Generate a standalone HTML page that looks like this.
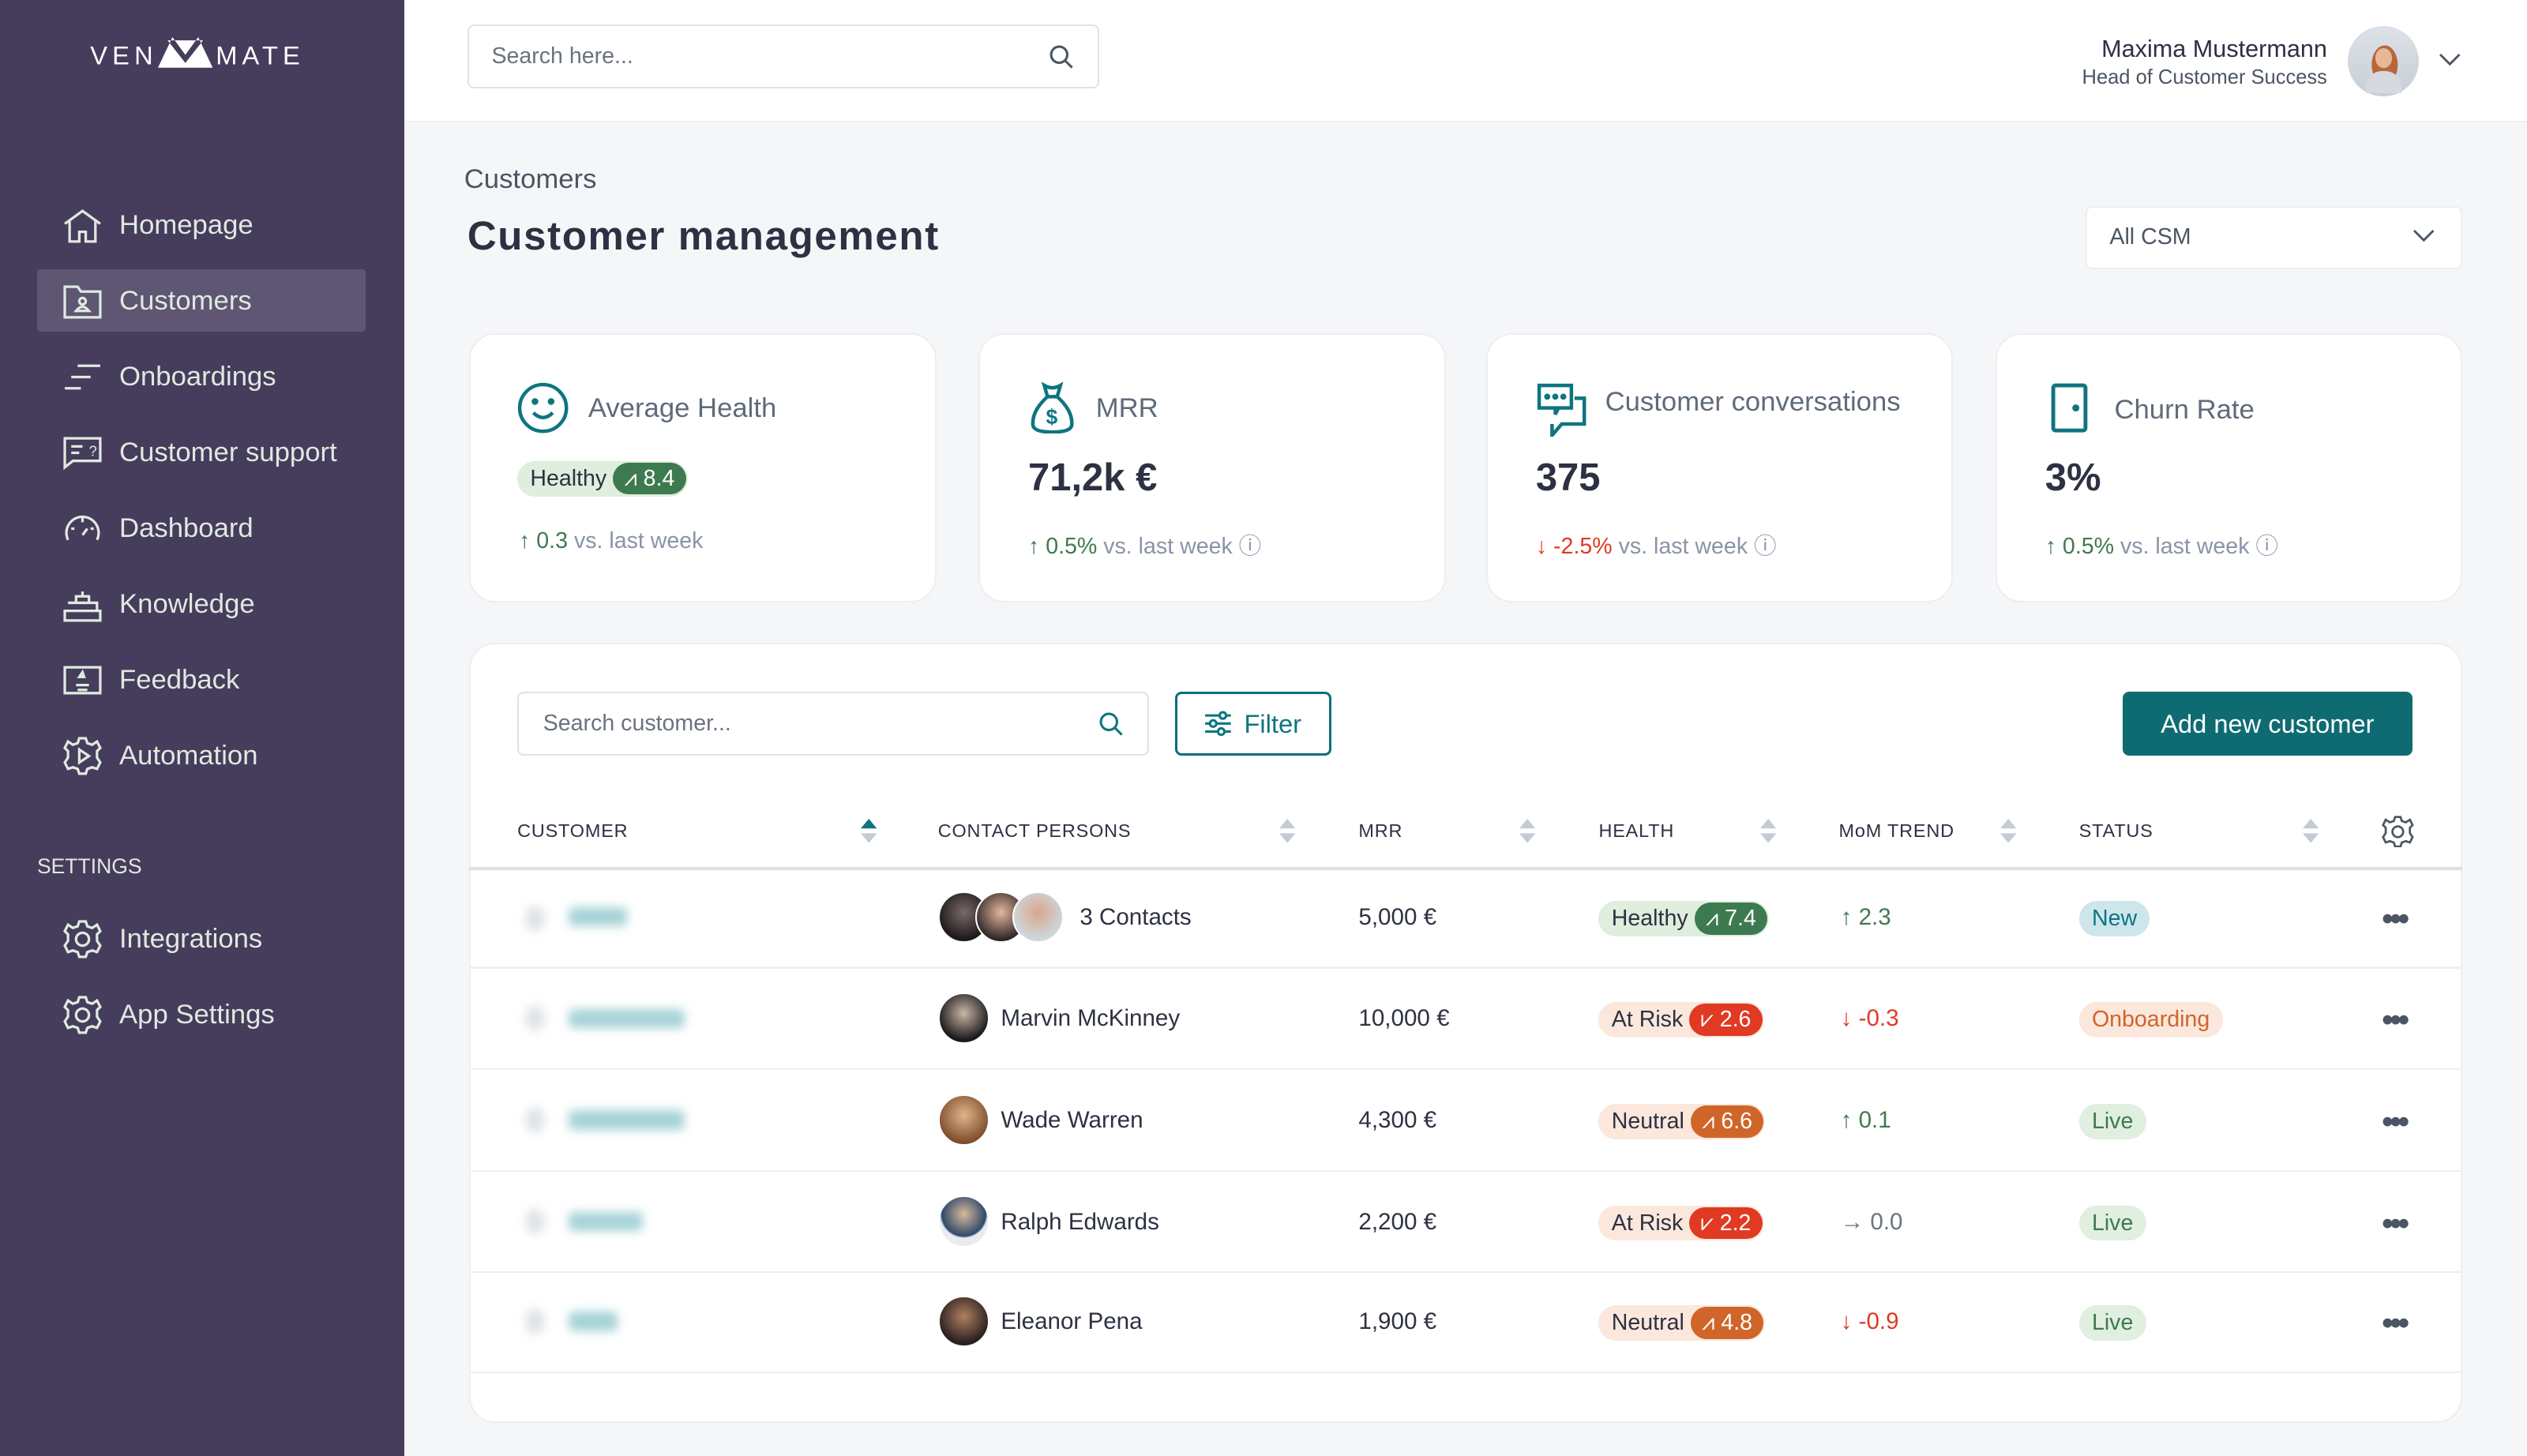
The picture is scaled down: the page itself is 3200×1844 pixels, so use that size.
<!DOCTYPE html>
<html><head><meta charset="utf-8">
<style>
*{box-sizing:border-box;margin:0;padding:0}
html,body{width:3200px;height:1844px;overflow:hidden;background:#f5f6f8}
#w{zoom:2.0408;width:1568px;height:904px;position:relative;font-family:"Liberation Sans",sans-serif;color:#2d3142;background:#f5f6f8}
.a{position:absolute}
.side{left:0;top:0;width:251px;height:904px;background:#463c5c}
.nav{position:absolute;left:74px;font-size:17px;color:#dfe9e0;line-height:20px}
.ni{position:absolute;left:39px;width:24px;height:24px}
.top{left:251px;top:0;width:1317px;height:76px;background:#fff;border-bottom:1px solid #eceef2}
.box{position:absolute;background:#fff;border:1px solid #dfe2e6;border-radius:4px}
.card{position:absolute;top:207px;width:290px;height:167px;background:#fff;border:1px solid #eceef2;border-radius:16px}
.ct{position:absolute;font-size:17px;color:#5f6b7a}
.cv{position:absolute;left:30px;top:76px;font-size:24px;font-weight:bold;color:#2d3142}
.tr{position:absolute;left:30px;top:119px;font-size:14px;color:#8a94a6}
.th{position:absolute;top:509px;font-size:11.5px;letter-spacing:.4px;color:#2d3142}
.so{position:absolute;top:508px;width:10px;height:15px}
.cell{position:absolute;font-size:14.5px;color:#2d3142}
.g{color:#3e7a4f !important}.r{color:#e03a22 !important}
.hb{position:absolute;height:22px;border-radius:11px;font-size:14px;line-height:22px;padding-left:8px;white-space:nowrap}
.hb span{display:inline-block;height:20px;line-height:20px;margin:1px 1px 0 4px;border-radius:10px;padding:0 7px;color:#fff;font-size:14px}
.st{position:absolute;height:22px;line-height:22px;border-radius:11px;padding:0 8px;font-size:14px}
.line{position:absolute;left:291px;width:1237px;height:1px;background:#eceef2}
.dots{position:absolute;left:1478px;font-size:20px;line-height:20px;font-weight:bold;color:#4b5563;letter-spacing:-2px}
.blur{position:absolute;filter:blur(3px)}
.av{position:absolute;width:32px;height:32px;border-radius:50%;border:1px solid #fff}
</style></head><body><div id="w">
<div class="a side"></div>
<div class="a" style="left:56px;top:22px;color:#fff;font-size:16px;letter-spacing:3px">VEN<svg width="34" height="20" viewBox="0 0 34 20" style="vertical-align:-2px;margin:0 2px 0 0"><path d="M0 20 L9 1 L17 12 L25 1 L34 20 Z M6 3 H28 L17 17 Z" fill="#fff" fill-rule="evenodd"/></svg>MATE</div>
<div class="a" style="left:23px;top:167px;width:204px;height:39px;background:#5e5672;border-radius:2px"></div>
<svg class="ni" style="top:128px" viewBox="0 0 24 24" fill="none" stroke="#dfe9e0" stroke-width="1.6"><path d="M1 11 L12 3 L23 11 M4 9 V22 H10 V16 H14 V22 H20 V9"/></svg>
<div class="nav" style="top:130px">Homepage</div>
<svg class="ni" style="top:175px" viewBox="0 0 24 24" fill="none" stroke="#dfe9e0" stroke-width="1.6"><path d="M1 3 H9 L11 6 H23 V22 H1 Z"/><circle cx="12" cy="12" r="2"/><path d="M8 18 Q12 13 16 18 Z"/></svg>
<div class="nav" style="top:177px">Customers</div>
<svg class="ni" style="top:222px" viewBox="0 0 24 24" fill="none" stroke="#dfe9e0" stroke-width="1.6"><path d="M9 5 H23 M5 12 H17 M1 19 H11"/></svg>
<div class="nav" style="top:224px">Onboardings</div>
<svg class="ni" style="top:269px" viewBox="0 0 24 24" fill="none" stroke="#dfe9e0" stroke-width="1.6"><path d="M1 3 H23 V17 H6 L1 21 Z M5 8 H12 M5 12 H10"/><text x="16" y="14" font-size="9" fill="#dfe9e0" stroke="none">?</text></svg>
<div class="nav" style="top:271px">Customer support</div>
<svg class="ni" style="top:316px" viewBox="0 0 24 24" fill="none" stroke="#dfe9e0" stroke-width="1.6"><path d="M3 19 A10 10 0 1 1 21 19 M12 5 V8 M5 12 H7 M17 12 H19 M12 16 L15 12"/></svg>
<div class="nav" style="top:318px">Dashboard</div>
<svg class="ni" style="top:363px" viewBox="0 0 24 24" fill="none" stroke="#dfe9e0" stroke-width="1.6"><path d="M1 16 H23 V22 H1 Z M3 11 H21 V16 M8 11 V7 H16 V11 M12 7 V4"/></svg>
<div class="nav" style="top:365px">Knowledge</div>
<svg class="ni" style="top:410px" viewBox="0 0 24 24" fill="none" stroke="#dfe9e0" stroke-width="1.6"><path d="M1 4 H23 V20 H1 Z M8 15 H16 M9 18 H15"/><path d="M12 7 L13 10 L10 10 Z" fill="#dfe9e0"/></svg>
<div class="nav" style="top:412px">Feedback</div>
<svg class="ni" style="top:457px" viewBox="0 0 24 24" fill="none" stroke="#dfe9e0" stroke-width="1.6"><path d="M10 1 H14 L15 4 L18 5 L21 3 L23 7 L21 9 V13 L23 16 L21 20 L18 19 L15 20 L14 23 H10 L9 20 L6 19 L3 20 L1 16 L3 13 V9 L1 7 L3 3 L6 5 L9 4 Z M10 8 V16 L16 12 Z"/></svg>
<div class="nav" style="top:459px">Automation</div>
<div class="a" style="left:23px;top:530px;font-size:13px;color:#dfe9e0">SETTINGS</div>
<svg class="ni" style="top:571px" viewBox="0 0 24 24" fill="none" stroke="#dfe9e0" stroke-width="1.6"><path d="M10 1 H14 L15 4 L18 5 L21 3 L23 7 L21 9 V13 L23 16 L21 20 L18 19 L15 20 L14 23 H10 L9 20 L6 19 L3 20 L1 16 L3 13 V9 L1 7 L3 3 L6 5 L9 4 Z"/><circle cx="12" cy="12" r="4"/></svg>
<div class="nav" style="top:573px">Integrations</div>
<svg class="ni" style="top:618px" viewBox="0 0 24 24" fill="none" stroke="#dfe9e0" stroke-width="1.6"><path d="M10 1 H14 L15 4 L18 5 L21 3 L23 7 L21 9 V13 L23 16 L21 20 L18 19 L15 20 L14 23 H10 L9 20 L6 19 L3 20 L1 16 L3 13 V9 L1 7 L3 3 L6 5 L9 4 Z"/><circle cx="12" cy="12" r="4"/></svg>
<div class="nav" style="top:620px">App Settings</div>

<div class="a top"></div>
<div class="box" style="left:290px;top:15px;width:392px;height:40px"></div>
<div class="a" style="left:305px;top:27px;font-size:14px;color:#6b7280">Search here...</div>
<svg class="a" style="left:650px;top:27px" width="16" height="16" viewBox="0 0 16 16" fill="none" stroke="#4b5563" stroke-width="1.5"><circle cx="7" cy="7" r="5"/><path d="M11 11 L15 15"/></svg>
<div class="a" style="right:124px;top:22px;font-size:15px;color:#2d3142;text-align:right">Maxima Mustermann</div>
<div class="a" style="right:124px;top:41px;font-size:12.5px;color:#4b5563;text-align:right">Head of Customer Success</div>
<div class="a" style="left:1457px;top:16px;width:44px;height:44px;border-radius:50%;background:radial-gradient(ellipse 30% 45% at 52% 55%,#b8663a 0 60%,transparent 62%),linear-gradient(#dde2e8,#c8ced6);"></div>
<div class="a" style="left:1474px;top:30px;width:10px;height:12px;border-radius:50%;background:#e6b898"></div>
<div class="a" style="left:1468px;top:44px;width:22px;height:14px;border-radius:10px 10px 0 0;background:#d6d9dd"></div>
<svg class="a" style="left:1513px;top:33px" width="14" height="9" viewBox="0 0 14 9" fill="none" stroke="#4b5563" stroke-width="1.4"><path d="M1 1 L7 7 L13 1"/></svg>

<div class="a" style="left:288px;top:102px;font-size:17px;color:#4b5563">Customers</div>
<div class="a" style="left:290px;top:132px;font-size:25px;font-weight:bold;color:#2d3142;letter-spacing:.8px">Customer management</div>
<div class="box" style="left:1294px;top:128px;width:234px;height:39px;border-color:#eceef2"></div>
<div class="a" style="left:1309px;top:139px;font-size:14px;color:#4b5563">All CSM</div>
<svg class="a" style="left:1497px;top:142px" width="14" height="9" viewBox="0 0 14 9" fill="none" stroke="#4b5563" stroke-width="1.4"><path d="M1 1 L7 7 L13 1"/></svg>

<div class="card" style="left:291px">
<svg class="a" style="left:29px;top:29px" width="32" height="32" viewBox="0 0 32 32" fill="none" stroke="#0e7580" stroke-width="2.2"><circle cx="16" cy="16" r="14.5"/><circle cx="11" cy="12" r="1" fill="#0e7580"/><circle cx="21" cy="12" r="1" fill="#0e7580"/><path d="M10 19 Q16 25 22 19"/></svg>
<div class="ct" style="left:73px;top:36px">Average Health</div>
<div class="hb" style="left:29px;top:78px;background:#dfeedd;color:#2d3142">Healthy<span style="background:#3e7a4f">⩘ 8.4</span></div>
<div class="tr" style="top:120px"><span class="g">↑ 0.3</span> vs. last week</div>
</div>
<div class="card" style="left:607px">
<svg class="a" style="left:30px;top:29px" width="30" height="32" viewBox="0 0 30 32" fill="none" stroke="#0e7580" stroke-width="2.2"><path d="M10 2 Q15 5 20 2 L18 9 H12 Z M12 9 Q2 18 3 27 Q4 31 15 31 Q26 31 27 27 Q28 18 18 9"/><text x="11" y="26" font-size="13" font-weight="bold" fill="#0e7580" stroke="none">$</text></svg>
<div class="ct" style="left:72px;top:36px">MRR</div>
<div class="cv" style="top:75px">71,2k €</div>
<div class="tr" style="top:120px"><span class="g">↑ 0.5%</span> vs. last week ⓘ</div>
</div>
<div class="card" style="left:922px">
<svg class="a" style="left:30px;top:29px" width="32" height="34" viewBox="0 0 32 34" fill="none" stroke="#0e7580" stroke-width="2.2"><path d="M2 2 H22 V16 H14 L12 20 V16 H2 Z M24 10 H30 V26 H16 L10 33 V26"/><circle cx="7" cy="9" r=".8" fill="#0e7580"/><circle cx="12" cy="9" r=".8" fill="#0e7580"/><circle cx="17" cy="9" r=".8" fill="#0e7580"/></svg>
<div class="ct" style="left:73px;top:32px">Customer conversations</div>
<div class="cv" style="top:75px">375</div>
<div class="tr" style="top:120px"><span class="r">↓ -2.5%</span> vs. last week ⓘ</div>
</div>
<div class="card" style="left:1238px">
<svg class="a" style="left:33px;top:29px" width="24" height="32" viewBox="0 0 24 32" fill="none" stroke="#0e7580" stroke-width="2.4"><rect x="2" y="2" width="20" height="28" rx="1.5"/><circle cx="16" cy="16" r="1" fill="#0e7580"/></svg>
<div class="ct" style="left:73px;top:37px">Churn Rate</div>
<div class="cv" style="top:75px">3%</div>
<div class="tr" style="top:120px"><span class="g">↑ 0.5%</span> vs. last week ⓘ</div>
</div>

<div class="a" style="left:291px;top:399px;width:1237px;height:484px;background:#fff;border:1px solid #eceef2;border-radius:16px"></div>
<div class="box" style="left:321px;top:429px;width:392px;height:40px"></div>
<div class="a" style="left:337px;top:441px;font-size:14px;color:#6b7280">Search customer...</div>
<svg class="a" style="left:681px;top:441px" width="16" height="16" viewBox="0 0 16 16" fill="none" stroke="#0e7580" stroke-width="1.5"><circle cx="7" cy="7" r="5"/><path d="M11 11 L15 15"/></svg>
<div class="a" style="left:729px;top:429px;width:97px;height:40px;border:1.5px solid #0e6f78;border-radius:4px"></div>
<svg class="a" style="left:747px;top:441px" width="18" height="16" viewBox="0 0 18 16" fill="none" stroke="#0e7580" stroke-width="1.5"><path d="M1 3 H17 M1 8 H17 M1 13 H17"/><circle cx="12" cy="3" r="2" fill="#fff"/><circle cx="6" cy="8" r="2" fill="#fff"/><circle cx="11" cy="13" r="2" fill="#fff"/></svg>
<div class="a" style="left:772px;top:440px;font-size:16px;color:#0e7580">Filter</div>
<div class="a" style="left:1317px;top:429px;width:180px;height:40px;background:#0e6b72;border-radius:4px;color:#fff;font-size:16px;text-align:center;line-height:40px">Add new customer</div>

<div class="th" style="left:321px">CUSTOMER</div>
<div class="th" style="left:582px">CONTACT PERSONS</div>
<div class="th" style="left:843px">MRR</div>
<div class="th" style="left:992px">HEALTH</div>
<div class="th" style="left:1141px">MoM TREND</div>
<div class="th" style="left:1290px">STATUS</div>
<svg class="so" style="left:534px" viewBox="0 0 10 15"><path d="M5 0 L10 6 H0Z" fill="#0e7580"/><path d="M0 9 H10 L5 15Z" fill="#c5cbd2"/></svg>
<svg class="so" style="left:794px" viewBox="0 0 10 15" fill="#c5cbd2"><path d="M5 0 L10 6 H0Z M0 9 H10 L5 15Z"/></svg>
<svg class="so" style="left:943px" viewBox="0 0 10 15" fill="#c5cbd2"><path d="M5 0 L10 6 H0Z M0 9 H10 L5 15Z"/></svg>
<svg class="so" style="left:1092px" viewBox="0 0 10 15" fill="#c5cbd2"><path d="M5 0 L10 6 H0Z M0 9 H10 L5 15Z"/></svg>
<svg class="so" style="left:1241px" viewBox="0 0 10 15" fill="#c5cbd2"><path d="M5 0 L10 6 H0Z M0 9 H10 L5 15Z"/></svg>
<svg class="so" style="left:1429px" viewBox="0 0 10 15" fill="#c5cbd2"><path d="M5 0 L10 6 H0Z M0 9 H10 L5 15Z"/></svg>
<svg class="a" style="left:1478px;top:506px" width="20" height="20" viewBox="0 0 24 24" fill="none" stroke="#4b5563" stroke-width="1.6"><path d="M10 1 H14 L15 4 L18 5 L21 3 L23 7 L21 9 V13 L23 16 L21 20 L18 19 L15 20 L14 23 H10 L9 20 L6 19 L3 20 L1 16 L3 13 V9 L1 7 L3 3 L6 5 L9 4 Z"/><circle cx="12" cy="12" r="4"/></svg>
<div class="a" style="left:291px;top:538px;width:1237px;height:2px;background:#dde1e5"></div>
<div class="line" style="top:600px"></div><div class="line" style="top:663px"></div><div class="line" style="top:726px"></div><div class="line" style="top:789px"></div><div class="line" style="top:851px"></div>

<!-- row 1 -->
<div class="blur" style="left:326px;top:562px;width:12px;height:16px;border-radius:50%;background:#dfe3e8"></div>
<div class="blur" style="left:353px;top:563px;width:36px;height:12px;background:#a7d3d6;border-radius:3px"></div>
<div class="av" style="left:582px;top:553px;background:radial-gradient(circle at 50% 40%,#7b6a68,#1f1a1c 70%)"></div>
<div class="av" style="left:605px;top:553px;background:radial-gradient(circle at 50% 40%,#e4b79b,#2a2225 75%)"></div>
<div class="av" style="left:628px;top:553px;background:radial-gradient(circle at 50% 40%,#d8a78d,#cfd7db 70%)"></div>
<div class="cell" style="left:670px;top:561px">3 Contacts</div>
<div class="cell" style="left:843px;top:561px">5,000 €</div>
<div class="hb" style="left:992px;top:559px;background:#dfeedd">Healthy<span style="background:#3e7a4f">⩘ 7.4</span></div>
<div class="cell g" style="left:1142px;top:561px">↑ 2.3</div>
<div class="st" style="left:1290px;top:559px;background:#cde6ec;color:#0e7580">New</div>
<div class="dots" style="top:560px">•••</div>
<!-- row 2 -->
<div class="blur" style="left:326px;top:624px;width:12px;height:16px;border-radius:50%;background:#dfe3e8"></div>
<div class="blur" style="left:353px;top:626px;width:72px;height:12px;background:#a7d3d6;border-radius:3px"></div>
<div class="av" style="left:582px;top:616px;background:radial-gradient(circle at 50% 40%,#c9b7a6,#1d1a1d 70%)"></div>
<div class="cell" style="left:621px;top:624px">Marvin McKinney</div>
<div class="cell" style="left:843px;top:624px">10,000 €</div>
<div class="hb" style="left:992px;top:622px;background:#fbe7dc">At Risk<span style="background:#e03a22">⩗ 2.6</span></div>
<div class="cell r" style="left:1142px;top:624px">↓ -0.3</div>
<div class="st" style="left:1290px;top:622px;background:#fbe7dc;color:#d0652a">Onboarding</div>
<div class="dots" style="top:623px">•••</div>
<!-- row 3 -->
<div class="blur" style="left:326px;top:687px;width:12px;height:16px;border-radius:50%;background:#dfe3e8"></div>
<div class="blur" style="left:353px;top:689px;width:72px;height:12px;background:#a7d3d6;border-radius:3px"></div>
<div class="av" style="left:582px;top:679px;background:radial-gradient(circle at 50% 40%,#e2b48a,#7a4a2a 75%)"></div>
<div class="cell" style="left:621px;top:687px">Wade Warren</div>
<div class="cell" style="left:843px;top:687px">4,300 €</div>
<div class="hb" style="left:992px;top:685px;background:#fbe7dc">Neutral<span style="background:#d0652a">⩘ 6.6</span></div>
<div class="cell g" style="left:1142px;top:687px">↑ 0.1</div>
<div class="st" style="left:1290px;top:685px;background:#e0efe0;color:#3e7a4f">Live</div>
<div class="dots" style="top:686px">•••</div>
<!-- row 4 -->
<div class="blur" style="left:326px;top:750px;width:12px;height:16px;border-radius:50%;background:#dfe3e8"></div>
<div class="blur" style="left:353px;top:752px;width:46px;height:12px;background:#a7d3d6;border-radius:3px"></div>
<div class="av" style="left:582px;top:742px;background:radial-gradient(circle at 50% 35%,#d9b99c,#2f4a6a 55%,#e8ecef 60%)"></div>
<div class="cell" style="left:621px;top:750px">Ralph Edwards</div>
<div class="cell" style="left:843px;top:750px">2,200 €</div>
<div class="hb" style="left:992px;top:748px;background:#fbe7dc">At Risk<span style="background:#e03a22">⩗ 2.2</span></div>
<div class="cell" style="left:1142px;top:750px;color:#6b7280">→ 0.0</div>
<div class="st" style="left:1290px;top:748px;background:#e0efe0;color:#3e7a4f">Live</div>
<div class="dots" style="top:749px">•••</div>
<!-- row 5 -->
<div class="blur" style="left:326px;top:812px;width:12px;height:16px;border-radius:50%;background:#dfe3e8"></div>
<div class="blur" style="left:353px;top:814px;width:30px;height:12px;background:#a7d3d6;border-radius:3px"></div>
<div class="av" style="left:582px;top:804px;background:radial-gradient(circle at 50% 40%,#b08060,#2a2020 70%)"></div>
<div class="cell" style="left:621px;top:812px">Eleanor Pena</div>
<div class="cell" style="left:843px;top:812px">1,900 €</div>
<div class="hb" style="left:992px;top:810px;background:#fbe7dc">Neutral<span style="background:#d0652a">⩘ 4.8</span></div>
<div class="cell r" style="left:1142px;top:812px">↓ -0.9</div>
<div class="st" style="left:1290px;top:810px;background:#e0efe0;color:#3e7a4f">Live</div>
<div class="dots" style="top:811px">•••</div>
</div></body></html>
